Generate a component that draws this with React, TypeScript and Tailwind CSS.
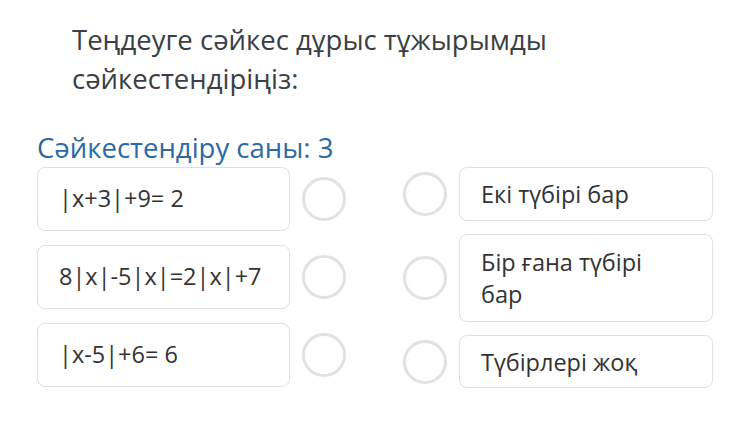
const left = ["|x+3|+9= 2", "8|x|-5|x|=2|x|+7", "|x-5|+6= 6"];

const right = [
  { text: "Екі түбірі бар", h: "h-[54px]" },
  { text: "Бір ғана түбірі\nбар", h: "h-[88px]" },
  { text: "Түбірлері жоқ", h: "h-[53px]" },
];

function Dot() {
  return (
    <span className="block h-[44px] w-[44px] shrink-0 rounded-full border-[3px] border-[#e1e1e6] bg-white" />
  );
}

export default function App() {
  return (
    <div className="h-[430px] w-[748px] bg-white font-['Open_Sans',sans-serif]">
      {/* Question */}
      <div className="pl-[72px] pt-[20px] text-[27.5px] leading-[39px] text-[#3b3f45]">
        Теңдеуге сәйкес дұрыс тұжырымды
        <br />
        сәйкестендіріңіз:
      </div>

      <div className="mt-[33px] pl-[37px] text-[27.5px] leading-[34px] text-[#2c6aa6]">
        Сәйкестендіру саны: 3
      </div>

      <div className="mt-[2px] flex pl-[37px]">
        {/* Left column */}
        <div className="flex flex-col gap-[14px]">
          {left.map((t) => (
            <div key={t} className="flex items-center gap-[12px]">
              <div className="flex h-[64px] w-[253px] items-center rounded-lg border border-[#e0e0e4] px-[21px] text-[23.5px] text-[#333]">
                {t}
              </div>
              <Dot />
            </div>
          ))}
        </div>

        {/* Right column */}
        <div className="ml-[57px] flex flex-col gap-[13px]">
          {right.map((r) => (
            <div key={r.text} className="flex items-center gap-[12px]">
              <Dot />
              <div
                className={`flex ${r.h} w-[254px] items-center whitespace-pre-line rounded-lg border border-[#e0e0e4] px-[21px] text-[23.5px] leading-[32px] text-[#333]`}
              >
                {r.text}
              </div>
            </div>
          ))}
        </div>
      </div>
    </div>
  );
}
